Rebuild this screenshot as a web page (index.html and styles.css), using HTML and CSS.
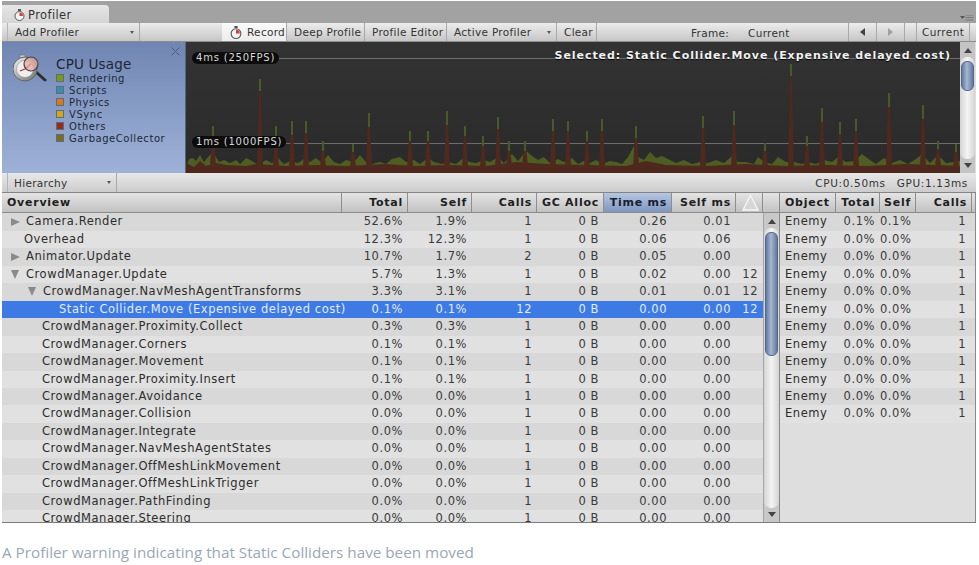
FILE: index.html
```html
<!DOCTYPE html>
<html lang="en">
<head>
<meta charset="utf-8">
<title>Profiler</title>
<link rel="stylesheet" href="styles.css">
</head>
<body>
<main class="window">
  <div class="tabbar">
    <div class="tab">
      <svg class="watch" width="11" height="12" viewBox="0 0 11 12"><rect x="4" y="0" width="3" height="2" fill="#555"/><circle cx="5.5" cy="7" r="4.5" fill="#f4f4f4" stroke="#555"/><path d="M5.5 7V3.4A3.6 3.6 0 0 1 9 7z" fill="#d8402c"/></svg>
      <span>Profiler</span>
    </div>
    <svg class="panemenu" width="14" height="7" viewBox="0 0 14 7"><path d="M0 1h5L2.500 4z" fill="#555"/><path d="M5.500 0h8M5.500 2.500h8M5.500 5h8" stroke="#777" stroke-width="1.200"/></svg>
  </div>
  <div class="toolbar">
    <div class="tbtn add">Add Profiler<i class="caret"></i></div>
    <div class="tbtn record active">
      <svg class="watch" width="12" height="13" viewBox="0 0 11 12"><rect x="4" y="0" width="3" height="2" fill="#555"/><circle cx="5.5" cy="7" r="4.5" fill="#f4f4f4" stroke="#555"/><path d="M5.5 7V3.400A3.600 3.600 0 0 1 9 7z" fill="#d8402c"/></svg>
      <span>Record</span>
    </div>
    <div class="tbtn deep">Deep Profile</div>
    <div class="tbtn editor">Profile Editor</div>
    <div class="tbtn activep">Active Profiler<i class="caret"></i></div>
    <div class="tbtn clear">Clear</div>
    <div class="frame"><span>Frame:</span><span>Current</span></div>
    <div class="tbtn nav"><i class="tri-l"></i></div>
    <div class="tbtn nav"><i class="tri-r"></i></div>
    <div class="tbtn cur">Current</div>
  </div>
  <div class="charts">
    <div class="legend">
      <svg class="close" width="9" height="9" viewBox="0 0 9 9"><path d="M.5.500l8 8M8.500.500l-8 8" stroke="#4f5d7c" stroke-width="1"/></svg>
      <svg class="cpuicon" width="34" height="28" viewBox="0 0 34 28">
        <defs><linearGradient id="metal" x1="0" y1="0" x2="1" y2="1"><stop offset="0" stop-color="#f4f4f4"/><stop offset="1" stop-color="#6c6c6c"/></linearGradient></defs>
        <path d="M23 18l9 8" stroke="#2e2e2e" stroke-width="3" stroke-linecap="round"/>
        <rect x="7" y="1" width="5" height="4" fill="#ccc" stroke="#666" stroke-width=".5"/>
        <circle cx="12" cy="15" r="12" fill="url(#metal)" stroke="#666"/>
        <circle cx="12" cy="15" r="8.500" fill="#eeeeee" stroke="#888" stroke-width=".5"/>
        <path d="M12 15l6-5M12 15l-5 2" stroke="#b8322a" stroke-width="1.300"/>
        <circle cx="18" cy="10" r="7" fill="#e8a8a0" fill-opacity=".75" stroke="#444" stroke-width="1.200"/>
      </svg>
      <div class="legend-body">
        <h2>CPU Usage</h2>
        <ul>
          <li><i class="sw sw-render"></i>Rendering</li>
          <li><i class="sw sw-script"></i>Scripts</li>
          <li><i class="sw sw-phys"></i>Physics</li>
          <li><i class="sw sw-vsync"></i>VSync</li>
          <li><i class="sw sw-other"></i>Others</li>
          <li><i class="sw sw-gc"></i>GarbageCollector</li>
        </ul>
      </div>
    </div>
    <div class="graph">
      <svg class="plot" width="774" height="131" viewBox="0 0 774 131">
        <path class="gridline" d="M90 16.500H774M100 101.500H774"/>
        <path class="green" d="M0 131V124L3 117L7 116L10 119L14 113L18 120L22 115L27 110L33 120L38 118L44 121L50 118L54 122L60 116L66 119L72 123L80 118L86 121L92 116L98 122L104 119L112 121L118 117L124 120L130 116L136 121L142 113L148 120L154 122L160 118L168 120L174 113L180 120L186 122L194 120L200 122L206 117L214 115L220 120L228 118L234 122L242 116L248 120L256 122L262 120L270 122L276 117L284 120L290 121L298 118L304 120L312 115L318 121L326 112L332 119L340 109L346 114L352 118L358 115L364 121L372 117L378 120L386 116L392 122L398 119L404 121L410 118L416 122L424 119L430 120L436 122L442 115L448 104L452 115L458 118L464 110L470 116L476 114L482 117L490 121L498 118L506 122L514 120L522 121L530 118L538 121L546 114L552 120L560 120L568 122L572 115L578 120L586 122L592 115L600 120L608 120L616 122L622 120L630 122L638 118L646 120L652 115L660 120L668 119L676 112L684 118L690 122L698 116L706 121L714 118L722 122L730 117L736 112L744 121L752 113L760 121L774 119V131Z"/>
        <path class="brown" d="M0 131V121L8 125L14 119L20 124L30 121L40 123L60 124L70 122L100 124L130 123L160 124L200 122L230 124L260 123L300 124L330 120L360 122L400 123L440 124L460 119L480 123L520 124L560 122L600 124L640 123L680 124L720 122L774 124V131Z"/>
        <path class="spike" d="M24 125L26.500 84H27.500L30 125ZM71 125L73.500 37H74.500L77 125ZM87 125L89.500 84H90.500L93 125ZM103 125L105.500 79H106.500L109 125ZM117 125L119.500 79H120.500L123 125ZM134 125L136.500 99H137.500L140 125ZM164 125L166.500 102H167.500L170 125ZM180 125L182.500 71H183.500L186 125ZM221 125L223.500 89H224.500L227 125ZM239 125L241.500 89H242.500L245 125ZM258 125L260.500 69H261.500L264 125ZM276 125L278.500 84H279.500L282 125ZM294 125L296.500 94H297.500L300 125ZM309 125L311.500 75H312.500L315 125ZM320 125L322.500 99H323.500L326 125ZM336 125L338.500 99H339.500L342 125ZM364 125L366.500 77H367.500L370 125ZM379 125L381.500 79H382.500L385 125ZM398 125L400.500 89H401.500L404 125ZM413 125L415.500 77H416.500L419 125ZM447 125L449.500 84H450.500L453 125ZM514 125L516.500 74H517.500L520 125ZM545 125L547.500 69H548.500L551 125ZM576 125L578.500 101H579.500L582 125ZM602 125L604.500 22H605.500L608 125ZM618 125L620.500 94H621.500L624 125ZM633 125L635.500 66H636.500L639 125ZM651 125L653.500 80H654.500L657 125ZM667 125L669.500 77H670.500L673 125ZM700 125L702.500 51H703.500L706 125ZM734 125L736.500 63H737.500L740 125ZM749 125L751.500 99H752.500L755 125ZM767 125L769.500 102H770.500L773 125Z"/>
        <path class="tip" d="M26 84h2v14h-2zM73 37h2v12h-2zM89 84h2v12h-2zM105 79h2v14h-2zM119 79h2v12h-2zM136 99h2v10h-2zM166 102h2v8h-2zM182 71h2v14h-2zM223 89h2v10h-2zM241 89h2v10h-2zM260 69h2v14h-2zM278 84h2v10h-2zM296 94h2v10h-2zM311 75h2v12h-2zM322 99h2v10h-2zM338 99h2v10h-2zM366 77h2v12h-2zM381 79h2v10h-2zM400 89h2v10h-2zM415 77h2v12h-2zM449 84h2v12h-2zM516 74h2v12h-2zM547 69h2v14h-2zM578 101h2v8h-2zM604 22h2v12h-2zM620 94h2v10h-2zM635 66h2v14h-2zM653 80h2v12h-2zM669 77h2v12h-2zM702 51h2v14h-2zM736 63h2v14h-2zM751 99h2v8h-2zM769 102h2v8h-2z"/>
      </svg>
      <span class="pill pill-top">4ms (250FPS)</span>
      <span class="pill pill-bot">1ms (1000FPS)</span>
      <span class="selected">Selected: Static Collider.Move (Expensive delayed cost)</span>
    </div>
    <div class="vscroll">
      <i class="tri-u"></i>
      <div class="track"><div class="thumb thumb-graph"></div></div>
      <i class="tri-d"></i>
    </div>
  </div>
  <div class="subbar">
    <div class="tbtn hier">Hierarchy<i class="caret"></i></div>
    <div class="stats"><span>CPU:0.50ms</span><span>GPU:1.13ms</span></div>
  </div>
  <div class="panes">
    <section class="main-pane">
      <div class="cols head">
        <div class="h name">Overview</div><div class="h">Total</div><div class="h">Self</div><div class="h">Calls</div><div class="h">GC Alloc</div><div class="h sorted">Time ms</div><div class="h">Self ms</div>
        <div class="h warn"><svg width="17" height="17" viewBox="0 0 17 17"><path d="M8.500 1.500L16 16H1z" fill="#d6d6d6" stroke="#f6f6f6" stroke-width="1.300"/></svg></div><div class="h blank"></div>
      </div>
      <div class="table-body">
        <div class="rows">
          <div class="cols row"><div class="name i0"><i class="ar-r"></i>Camera.Render</div><div>52.6%</div><div>1.9%</div><div>1</div><div>0 B</div><div>0.26</div><div>0.01</div><div></div></div>
          <div class="cols row"><div class="name i-over">Overhead</div><div>12.3%</div><div>12.3%</div><div>1</div><div>0 B</div><div>0.06</div><div>0.06</div><div></div></div>
          <div class="cols row"><div class="name i0"><i class="ar-r"></i>Animator.Update</div><div>10.7%</div><div>1.7%</div><div>2</div><div>0 B</div><div>0.05</div><div>0.00</div><div></div></div>
          <div class="cols row"><div class="name i0"><i class="ar-d"></i>CrowdManager.Update</div><div>5.7%</div><div>1.3%</div><div>1</div><div>0 B</div><div>0.02</div><div>0.00</div><div>12</div></div>
          <div class="cols row"><div class="name i1"><i class="ar-d"></i>CrowdManager.NavMeshAgentTransforms</div><div>3.3%</div><div>3.1%</div><div>1</div><div>0 B</div><div>0.01</div><div>0.01</div><div>12</div></div>
          <div class="cols row sel"><div class="name i3">Static Collider.Move (Expensive delayed cost)</div><div>0.1%</div><div>0.1%</div><div>12</div><div>0 B</div><div>0.00</div><div>0.00</div><div>12</div></div>
          <div class="cols row"><div class="name i2">CrowdManager.Proximity.Collect</div><div>0.3%</div><div>0.3%</div><div>1</div><div>0 B</div><div>0.00</div><div>0.00</div><div></div></div>
          <div class="cols row"><div class="name i2">CrowdManager.Corners</div><div>0.1%</div><div>0.1%</div><div>1</div><div>0 B</div><div>0.00</div><div>0.00</div><div></div></div>
          <div class="cols row"><div class="name i2">CrowdManager.Movement</div><div>0.1%</div><div>0.1%</div><div>1</div><div>0 B</div><div>0.00</div><div>0.00</div><div></div></div>
          <div class="cols row"><div class="name i2">CrowdManager.Proximity.Insert</div><div>0.1%</div><div>0.1%</div><div>1</div><div>0 B</div><div>0.00</div><div>0.00</div><div></div></div>
          <div class="cols row"><div class="name i2">CrowdManager.Avoidance</div><div>0.0%</div><div>0.0%</div><div>1</div><div>0 B</div><div>0.00</div><div>0.00</div><div></div></div>
          <div class="cols row"><div class="name i2">CrowdManager.Collision</div><div>0.0%</div><div>0.0%</div><div>1</div><div>0 B</div><div>0.00</div><div>0.00</div><div></div></div>
          <div class="cols row"><div class="name i2">CrowdManager.Integrate</div><div>0.0%</div><div>0.0%</div><div>1</div><div>0 B</div><div>0.00</div><div>0.00</div><div></div></div>
          <div class="cols row"><div class="name i2">CrowdManager.NavMeshAgentStates</div><div>0.0%</div><div>0.0%</div><div>1</div><div>0 B</div><div>0.00</div><div>0.00</div><div></div></div>
          <div class="cols row"><div class="name i2">CrowdManager.OffMeshLinkMovement</div><div>0.0%</div><div>0.0%</div><div>1</div><div>0 B</div><div>0.00</div><div>0.00</div><div></div></div>
          <div class="cols row"><div class="name i2">CrowdManager.OffMeshLinkTrigger</div><div>0.0%</div><div>0.0%</div><div>1</div><div>0 B</div><div>0.00</div><div>0.00</div><div></div></div>
          <div class="cols row"><div class="name i2">CrowdManager.PathFinding</div><div>0.0%</div><div>0.0%</div><div>1</div><div>0 B</div><div>0.00</div><div>0.00</div><div></div></div>
          <div class="cols row"><div class="name i2">CrowdManager.Steering</div><div>0.0%</div><div>0.0%</div><div>1</div><div>0 B</div><div>0.00</div><div>0.00</div><div></div></div>
        </div>
        <div class="vscroll table-scroll">
          <i class="tri-u"></i>
          <div class="track"><div class="thumb thumb-table"></div></div>
          <i class="tri-d"></i>
        </div>
      </div>
    </section>
    <section class="side-pane">
      <div class="scols head">
        <div class="h name">Object</div><div class="h">Total</div><div class="h">Self</div><div class="h">Calls</div>
      </div>
      <div class="srows">
        <div class="scols row"><div class="name">Enemy</div><div>0.1%</div><div>0.1%</div><div>1</div></div>
        <div class="scols row"><div class="name">Enemy</div><div>0.0%</div><div>0.0%</div><div>1</div></div>
        <div class="scols row"><div class="name">Enemy</div><div>0.0%</div><div>0.0%</div><div>1</div></div>
        <div class="scols row"><div class="name">Enemy</div><div>0.0%</div><div>0.0%</div><div>1</div></div>
        <div class="scols row"><div class="name">Enemy</div><div>0.0%</div><div>0.0%</div><div>1</div></div>
        <div class="scols row"><div class="name">Enemy</div><div>0.0%</div><div>0.0%</div><div>1</div></div>
        <div class="scols row"><div class="name">Enemy</div><div>0.0%</div><div>0.0%</div><div>1</div></div>
        <div class="scols row"><div class="name">Enemy</div><div>0.0%</div><div>0.0%</div><div>1</div></div>
        <div class="scols row"><div class="name">Enemy</div><div>0.0%</div><div>0.0%</div><div>1</div></div>
        <div class="scols row"><div class="name">Enemy</div><div>0.0%</div><div>0.0%</div><div>1</div></div>
        <div class="scols row"><div class="name">Enemy</div><div>0.0%</div><div>0.0%</div><div>1</div></div>
        <div class="scols row"><div class="name">Enemy</div><div>0.0%</div><div>0.0%</div><div>1</div></div>
      </div>
    </section>
  </div>
</main>
<p class="caption">A Profiler warning indicating that Static Colliders have been moved</p>
</body>
</html>
```

FILE: styles.css
```css
* { box-sizing: border-box; }
html, body { margin: 0; padding: 0; background: #fff; }
body { width: 979px; height: 565px; overflow: hidden; font-family: "DejaVu Sans", sans-serif; font-size: 11px; color: #333; }
i { display: block; font-style: normal; }

.window { width: 974px; height: 522px; margin: 1px 0 0 2px; display: flex; flex-direction: column; background: #dedede; border-bottom: 1px solid #7d7d7d; }

.tabbar { height: 22px; background: #a2a2a2; position: relative; display: flex; align-items: flex-end; flex: none; }
.tab { width: 107px; height: 18px; background: linear-gradient(#e6e6e6, #d4d4d4); border-radius: 0 4px 0 0; display: flex; align-items: center; padding: 1px 0 0 12px; gap: 3px; font-size: 11.500px; letter-spacing: .4px; color: #333; }
.panemenu { position: absolute; right: 2px; top: 14px; }

.toolbar { height: 19px; flex: none; display: flex; align-items: stretch; background: linear-gradient(#ececec, #c6c6c6); border-bottom: 1px solid #8d8d8d; padding-left: 5px; }
.tbtn { display: flex; align-items: center; font-size: 10.500px; letter-spacing: .3px; color: #333; border-right: 1px solid #a8a8a8; position: relative; padding-left: 7px; white-space: nowrap; }
.caret { position: absolute; right: 5px; top: 8px; width: 0; height: 0; border: 2.500px solid transparent; border-top: 3px solid #555; border-bottom: 0; }
.add { width: 133px; border-left: 1px solid #b4b4b4; }
.record { width: 65px; margin-left: 82px; gap: 5px; padding-left: 8px; }
.active { background: linear-gradient(#fafafa, #ececec); }
.deep { width: 78px; }
.editor { width: 82px; }
.activep { width: 110px; }
.clear { width: 40px; }
.frame { width: 252px; display: flex; gap: 19px; padding-left: 94px; align-items: center; font-size: 10.500px; letter-spacing: .3px; border-right: 1px solid #a8a8a8; padding-top: 2px; }
.nav { width: 28px; justify-content: center; padding: 0; }
.cur { width: 54px; margin-left: 11px; border-left: 1px solid #a8a8a8; padding-left: 5px; letter-spacing: .4px; }
.tri-l { width: 0; height: 0; border: 4px solid transparent; border-left: 0; border-right: 5px solid #444; }
.tri-r { width: 0; height: 0; border: 4px solid transparent; border-right: 0; border-left: 5px solid #a0a0a0; }

.charts { height: 131px; flex: none; display: flex; }
.legend { width: 184px; background: linear-gradient(#7086b2, #9eb2d8); position: relative; display: flex; padding: 12px 0 0 11px; border-right: 1px solid #55657f; }
.close { position: absolute; right: 5px; top: 5px; }
.cpuicon { flex: none; margin-top: 0; }
.legend-body { padding: 2px 0 0 9px; color: #222; }
.legend-body h2 { margin: 0; font-size: 13.500px; line-height: 16px; font-weight: 400; color: #1e2636; letter-spacing: .2px; }
.legend-body ul { list-style: none; margin: 0; padding: 0; }
.legend-body li { height: 12px; display: flex; align-items: center; gap: 5px; font-size: 10px; letter-spacing: .55px; color: #20283a; white-space: nowrap; }
.sw { width: 8px; height: 8px; border: 1px solid #5b6a86; }
.sw-render { background: #7c9a0e; }
.sw-script { background: #3a8fa8; }
.sw-phys { background: #d87a10; }
.sw-vsync { background: #d4a810; }
.sw-other { background: #9c2c10; }
.sw-gc { background: #7d6e10; }

.graph { width: 774px; position: relative; background: linear-gradient(#333, #2a2a2a); overflow: hidden; }
.plot { display: block; filter: blur(.4px); }
.gridline { stroke: #6c6c6c; stroke-width: 1; fill: none; }
.green { fill: #4e5e22; }
.brown { fill: #4e281c; }
.spike { fill: #4f291d; }
.tip { fill: #4a5a24; }
.pill { position: absolute; left: 6px; height: 12px; line-height: 12px; padding: 0 4px; background: #0c0c0c; color: #d8d8d8; border-radius: 6px; font-size: 10px; letter-spacing: .8px; white-space: nowrap; }
.pill-top { top: 10px; }
.pill-bot { top: 94px; }
.selected { position: absolute; right: 9px; top: 7px; color: #f2f2f2; font-weight: 700; font-size: 11px; letter-spacing: .95px; white-space: nowrap; text-shadow: 0 1px 1px #000; }

.vscroll { width: 15px; flex: none; background: #c4c4c4; display: flex; flex-direction: column; align-items: center; }
.track { flex: 1; width: 100%; background: linear-gradient(90deg, #d4d4d4, #f4f4f4 50%, #d4d4d4); border-radius: 7px; position: relative; }
.thumb { position: absolute; left: 1px; right: 1px; border-radius: 6px; background: linear-gradient(90deg, #62789e, #a5b6d2 45%, #62789e); border: 1px solid #54688a; }
.tri-u { width: 0; height: 0; margin: 6px 0 4px; border: 4px solid transparent; border-top: 0; border-bottom: 5px solid #444; }
.tri-d { width: 0; height: 0; margin: 4px 0 5px; border: 4px solid transparent; border-bottom: 0; border-top: 5px solid #444; }
.thumb-graph { top: 4px; height: 30px; }
.thumb-table { top: 4px; height: 124px; }

.subbar { height: 20px; flex: none; display: flex; justify-content: space-between; background: linear-gradient(#e8e8e8, #cccccc); border-bottom: 1px solid #848484; padding-left: 5px; }
.hier { width: 110px; border-left: 1px solid #b4b4b4; padding-left: 6px; }
.stats { display: flex; gap: 11px; align-items: center; padding-right: 8px; font-size: 10.500px; letter-spacing: .65px; }

.panes { flex: 1; min-height: 0; display: flex; }
.main-pane { width: 778px; flex: none; display: flex; flex-direction: column; border-right: 1px solid #8a8a8a; }
.side-pane { flex: 1; display: flex; flex-direction: column; border-right: 1px solid #8a8a8a; }

.cols { display: grid; grid-template-columns: 340px 66px 64px 65px 67px 68px 64px 27px 16px; }
.scols { display: grid; grid-template-columns: 56px 44px 36px 56px; }
.head { height: 20px; flex: none; background: linear-gradient(#e4e4e4, #c2c2c2); border-bottom: 1px solid #8a8a8a; }
.h { font-weight: 700; font-size: 11px; letter-spacing: .75px; color: #1e1e1e; text-align: right; padding-right: 4px; line-height: 19px; border-right: 1px solid #8e8e8e; white-space: nowrap; }
.h.name { text-align: left; padding-left: 5px; }
.h.sorted { background: linear-gradient(#b6c6e2, #7f96c0); color: #18202e; }
.h.warn { padding: 1px 0 0 6px; }
.h.warn svg { display: block; }
.h.blank { border-right: 0; }
.side-pane .h.name { padding-left: 5px; }

.table-body { flex: 1; min-height: 0; display: flex; overflow: hidden; }
.rows { width: 761px; flex: none; overflow: hidden; padding-top: .3px; }
.table-scroll { width: 16px; background: #c8c8c8; border-left: 1px solid #a4a4a4; }

.row { height: 17.470px; line-height: 17.470px; font-size: 11.500px; letter-spacing: .55px; color: #3a3a3a; }
.row > div { text-align: right; padding-right: 5px; white-space: nowrap; }
.row > div.name { text-align: left; padding-right: 0; color: #2c2c2c; display: flex; align-items: center; }
.rows .row:nth-child(odd), .srows .row:nth-child(odd) { background: #d8d8d8; }
.rows .row:nth-child(even), .srows .row:nth-child(even) { background: #e1e1e1; }
.rows .row.sel { background: #3d7ae4; color: #e2ecfd; }
.rows .row.sel > div.name { color: #e2ecfd; }
.i0 { padding-left: 9px; }
.i-over { padding-left: 22px; }
.i1 { padding-left: 26px; }
.i2 { padding-left: 40px; }
.i3 { padding-left: 57px; }
.ar-r { width: 0; height: 0; margin-right: 6px; border: 4.500px solid transparent; border-right: 0; border-left: 9px solid #8a8a8a; }
.ar-d { width: 0; height: 0; margin-right: 7px; border: 4.500px solid transparent; border-bottom: 0; border-top: 9px solid #8a8a8a; }

.srows { flex: 1; padding-top: .3px; }
.srows .row > div.name { padding-left: 5px; }
.srows .row > div:last-child { padding-right: 6px; }

.caption { margin: 20px 0 0 2px; font-family: "Open Sans", sans-serif; font-size: 15.250px; line-height: 19px; color: #9aa7b8; white-space: nowrap; }
```
